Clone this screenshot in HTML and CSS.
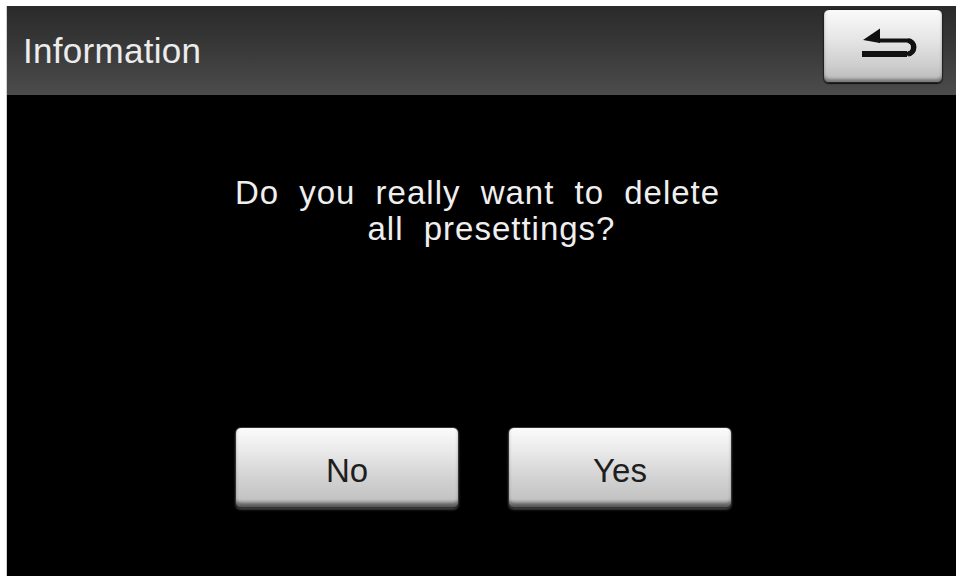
FILE: index.html
```html
<!DOCTYPE html>
<html lang="en">
<head>
<meta charset="utf-8">
<title>Information</title>
<link rel="stylesheet" href="styles.css">
</head>
<body>
<div class="screen">
  <header class="header">
    <h1 class="title">Information</h1>
    <button class="back-btn" aria-label="Back">
      <svg class="back-icon" width="120" height="74" viewBox="0 0 120 74">
        <polygon points="40,31 57,19.5 57,34" fill="#111"/>
        <path d="M55 31.5 H84 A6.8 6.8 0 0 1 84 45" fill="none" stroke="#111" stroke-width="4"/>
        <path d="M84 45 H39" fill="none" stroke="#111" stroke-width="6"/>
        <path d="M85 31.5 A6.8 6.8 0 0 1 85 45" fill="none" stroke="#111" stroke-width="5"/>
      </svg>
    </button>
  </header>
  <main class="body">
    <p class="message"><span class="line">Do you really want to delete</span><span class="line line-2">all presettings?</span></p>
    <div class="actions">
      <button class="btn">No</button>
      <button class="btn">Yes</button>
    </div>
  </main>
</div>
</body>
</html>
```

FILE: styles.css
```css
html, body {
  margin: 0;
  padding: 0;
  background: #ffffff;
}

body {
  width: 960px;
  height: 576px;
  overflow: hidden;
  font-family: "Liberation Sans", Arial, sans-serif;
}

.screen {
  margin: 6px 4px 0 6px;
  width: 950px;
  height: 570px;
  background: #000;
  display: flex;
  flex-direction: column;
  border-left: 1px solid #cfcfcf;
  box-sizing: border-box;
}

.header {
  height: 89px;
  flex: none;
  display: flex;
  justify-content: space-between;
  align-items: flex-start;
  background: linear-gradient(#2a2a2a 0%, #383838 45%, #4c4c4c 100%);
  padding: 3px 13px 0 16px;
  box-sizing: border-box;
}

.title {
  margin: 0;
  align-self: center;
  color: #ececec;
  font-size: 35px;
  font-weight: normal;
  letter-spacing: 0.3px;
  margin-bottom: 2px;
}

.back-btn {
  width: 120px;
  height: 74px;
  padding: 0;
  border: 1px solid #222;
  border-radius: 6px;
  background: linear-gradient(#fafafa 0%, #e6e6e6 40%, #cfcfcf 75%, #b9b9b9 100%);
  box-shadow: inset 0 -3px 3px rgba(0,0,0,0.35), 0 1px 1px #111;
  display: flex;
  align-items: center;
  justify-content: center;
  overflow: hidden;
}

.back-icon {
  display: block;
  flex: none;
}

.body {
  flex: 1;
  display: flex;
  flex-direction: column;
  align-items: center;
}

.message {
  margin: 80px 8px 0 0;
  color: #efefef;
  font-size: 33px;
  line-height: 36px;
  letter-spacing: 1px;
  word-spacing: 10px;
  text-align: center;
  display: flex;
  flex-direction: column;
  align-items: center;
}

.line {
  display: block;
  white-space: nowrap;
}

.line-2 {
  padding-left: 28px;
}

.actions {
  margin-top: 180px;
  display: flex;
  gap: 49px;
  margin-left: 4px;
}

.btn {
  width: 224px;
  height: 81px;
  border: 1px solid #333;
  border-radius: 6px;
  background: linear-gradient(#fbfbfb 0%, #e9e9e9 30%, #d4d4d4 60%, #c3c3c3 90%, #7a7a7a 100%);
  box-shadow: inset 0 -4px 3px rgba(0,0,0,0.3), 0 2px 2px #3a3a3a;
  color: #1e1e1e;
  font-family: "Liberation Sans", Arial, sans-serif;
  font-size: 33px;
  padding: 6px 0 0 0;
}
```
